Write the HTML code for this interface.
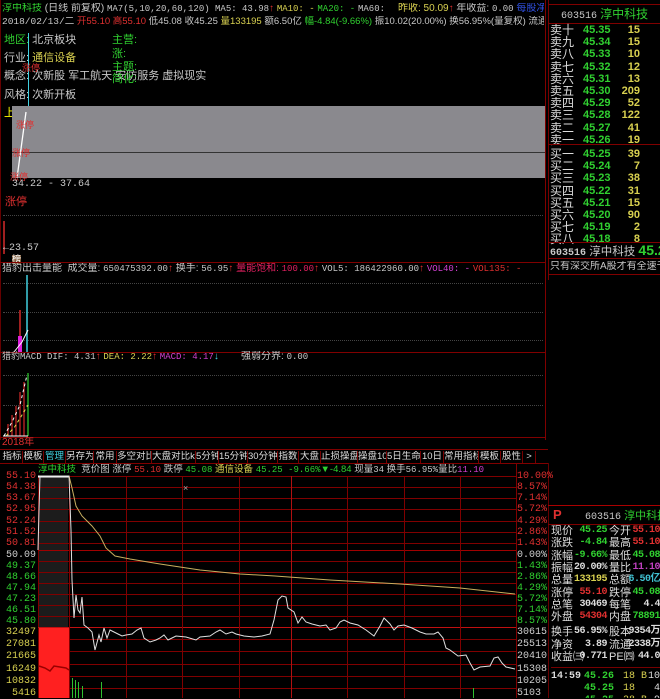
<!DOCTYPE html><html><head><meta charset="utf-8"><style>
*{margin:0;padding:0;box-sizing:border-box}
body{width:660px;height:698px;background:#000;overflow:hidden;position:relative;font-family:"Liberation Sans","Noto Sans CJK SC",sans-serif;font-size:11px;color:#c8c8c8}
.a{position:absolute;white-space:nowrap;line-height:12px}
.m{font-family:"Liberation Mono","Noto Sans CJK SC",monospace;font-size:10px}
.r{color:#e03030}.g{color:#30d030}.y{color:#d8d050}.w{color:#d0d0d0}.c{color:#40d0e0}.p{color:#d040d0}.b{color:#3050e0}
.hl{position:absolute;height:1px;background:#800000}
.vl{position:absolute;width:1px;background:#800000}
.dl{position:absolute;height:0;border-top:1px dotted #444}
.tab{position:absolute;top:451px;height:12px;font-size:9.5px;line-height:12px;color:#ddd;border-right:1px solid #700;white-space:nowrap;overflow:hidden;text-align:center}
.ob span{position:absolute}
.clip{position:absolute;overflow:hidden;white-space:nowrap;line-height:12px}
</style></head><body>
<div class="vl" style="left:0;top:0;height:440px;background:#600"></div>
<div class="vl" style="left:545px;top:0;height:440px"></div>
<div class="clip" style="left:2px;top:3px;width:388px;font-size:10px"><span class="g">淳中科技</span> (日线 前复权) <span class="m" style="font-size:9px">MA7(5,10,20,60,120) MA5: 43.98</span><span class="r">↑</span> <span class="m y" style="font-size:9px">MA10: -</span> <span class="m g" style="font-size:9px">MA20: -</span> <span class="m" style="font-size:9px">MA60: -</span> <span class="m b" style="font-size:9px">MA120 -</span></div>
<div class="clip" style="left:398px;top:3px;width:146px;font-size:10px"><span class="y">昨收: 50.09</span><span class="r">↑</span> 年收益: <span class="m" style="font-size:9px">0.00</span> <span class="b">每股净资产</span></div>
<div class="clip" style="left:2px;top:16px;width:542px;font-size:9.5px"><span class="m" style="font-size:9.5px">2018/02/13/二</span> <span class="r">开55.10 高55.10</span> 低45.08 收45.25 <span class="y">量133195</span> 额6.50亿 <span class="g">幅-4.84(-9.66%)</span> 振10.02(20.00%) 换56.95%(量复权) 流通2338万 <span class="y">通信设备</span></div>
<div class="a" style="left:4px;top:34px"><span class="g">地区:</span> 北京板块</div>
<div class="a" style="left:4px;top:52px">行业: <span class="y">通信设备</span></div>
<div class="a" style="left:4px;top:70px">概念: 次新股 军工航天 安防服务 虚拟现实</div>
<div class="a" style="left:4px;top:89px">风格: 次新开板</div>
<div class="a" style="left:4px;top:107px;color:#ff0">上市: <span class="y">20180202</span></div>
<div class="a g" style="left:112px;top:34px">主营:</div>
<div class="a g" style="left:112px;top:48px">涨:</div>
<div class="a g" style="left:112px;top:61px">主题:</div>
<div class="a g" style="left:112px;top:73px">简化:</div>
<div class="vl" style="left:28px;top:33px;height:78px;background:#40d0e0"></div>
<div class="a r" style="left:22px;top:62px;font-size:9px">涨停</div>
<div style="position:absolute;left:12px;top:106px;width:533px;height:72px;background:#8a898e"></div>
<div style="position:absolute;left:12px;top:152px;width:533px;height:1px;background:#333"></div>
<svg style="position:absolute;left:0;top:0" width="545" height="440"><line x1="26" y1="112" x2="17" y2="178" stroke="#fff" stroke-width="1.3"/></svg>
<div class="a r" style="left:16px;top:119px;font-size:9px">涨停</div>
<div class="a r" style="left:12px;top:147px;font-size:9px">涨停</div>
<div class="a r" style="left:10px;top:171px;font-size:9px">涨停</div>
<div class="a m" style="left:12px;top:179px">34.22 - 37.64</div>
<div class="a r" style="left:5px;top:196px">涨停</div>
<div class="dl" style="left:3px;top:215px;width:540px"></div>
<div style="position:absolute;left:3px;top:221px;width:2px;height:33px;background:#a02020"></div>
<div class="a m" style="left:3px;top:243px">←23.57</div>
<div class="a" style="left:12px;top:255px;font-size:9px;background:#806040;color:#fff;line-height:9px">榜</div>
<div class="hl" style="left:0;top:262px;width:545px"></div>
<div class="clip" style="left:2px;top:263px;width:542px;font-size:10px">猎豹出击量能 &nbsp;成交量: <span class="m" style="font-size:9px">650475392.00</span><span class="r">↑</span> 换手: <span class="m" style="font-size:9px">56.95</span><span class="r">↑</span> <span style="color:#e02060">量能饱和: <span class="m" style="font-size:9px">100.00</span></span><span class="r">↑</span> <span class="m" style="font-size:9px">VOL5: 186422960.00</span><span class="r">↑</span> <span class="m p" style="font-size:9px">VOL40: -</span> <span class="m r" style="font-size:9px">VOL135: -</span></div>
<div class="dl" style="left:3px;top:283px;width:540px"></div>
<div class="dl" style="left:3px;top:312px;width:540px"></div>
<div class="dl" style="left:3px;top:340px;width:540px"></div>
<svg style="position:absolute;left:0;top:270px" width="60" height="85"><rect x="19" y="40" width="2" height="42" fill="#a02020"/><rect x="18" y="66" width="4" height="16" fill="#e020e0"/><line x1="27" y1="5" x2="27" y2="82" stroke="#40d0e0" stroke-width="1.5"/><polyline points="14,82 22,72 28,60" fill="none" stroke="#fff"/></svg>
<div class="hl" style="left:0;top:352px;width:545px"></div>
<div class="clip" style="left:2px;top:351px;width:542px;font-size:10px"><span class="m" style="font-size:9px">猎豹MACD DIF: 4.31</span><span class="r">↑</span> <span class="m y" style="font-size:9px">DEA: 2.22</span><span class="r">↑</span> <span class="m p" style="font-size:9px">MACD: 4.17</span><span class="c">↓</span> &nbsp; &nbsp; &nbsp; &nbsp;强弱分界: <span class="m" style="font-size:9px">0.00</span></div>
<div class="dl" style="left:3px;top:375px;width:540px"></div>
<div class="dl" style="left:3px;top:405px;width:540px"></div>
<svg style="position:absolute;left:0;top:360px" width="40" height="80"><g fill="#801818"><rect x="7" y="64" width="2" height="12"/><rect x="11" y="55" width="2" height="21"/><rect x="15" y="46" width="2" height="30"/><rect x="19" y="32" width="2" height="44"/><rect x="23" y="22" width="2" height="54"/></g><line x1="28" y1="13" x2="28" y2="76" stroke="#30d030" stroke-width="1.2"/><polyline points="4,76 12,62 20,45 27,15" fill="none" stroke="#fff" stroke-dasharray="3,3"/><polyline points="6,76 14,68 22,55 28,45" fill="none" stroke="#e0e050" stroke-dasharray="3,3"/><line x1="3" y1="76" x2="28" y2="76" stroke="#fff"/></svg>
<div class="hl" style="left:0;top:437px;width:545px"></div>
<div class="a r" style="left:2px;top:437px;font-size:10px">2018年</div>
<div class="hl" style="left:0;top:449px;width:548px"></div>
<div class="hl" style="left:0;top:463px;width:548px"></div>
<div class="tab" style="left:2px;width:21px">指标</div><div class="tab" style="left:23px;width:21px">模板</div><div class="tab" style="left:44px;width:22px;color:#40d0e0">管理</div><div class="tab" style="left:66px;width:28px">另存为</div><div class="tab" style="left:94px;width:23px">常用</div><div class="tab" style="left:117px;width:35px">多空对比</div><div class="tab" style="left:152px;width:44px">大盘对比k</div><div class="tab" style="left:196px;width:23px">5分钟</div><div class="tab" style="left:219px;width:29px">15分钟</div><div class="tab" style="left:248px;width:30px">30分钟</div><div class="tab" style="left:278px;width:21px">指数</div><div class="tab" style="left:299px;width:22px">大盘</div><div class="tab" style="left:321px;width:37px">止损操盘</div><div class="tab" style="left:358px;width:29px">操盘10</div><div class="tab" style="left:387px;width:34px">5日生命</div><div class="tab" style="left:421px;width:23px">10日</div><div class="tab" style="left:444px;width:35px">常用指标</div><div class="tab" style="left:479px;width:22px">模板</div><div class="tab" style="left:501px;width:22px">股性</div><div class="tab" style="left:523px;width:13px">&gt;</div>
<div class="clip" style="left:38px;top:464px;width:478px;font-size:9.5px"><span class="g">淳中科技</span> &nbsp;竞价图 涨停 <span class="r m" style="font-size:9px">55.10</span> 跌停 <span class="g m" style="font-size:9px">45.08</span> <span class="y">通信设备</span> <span class="g m" style="font-size:9px">45.25 -9.66%</span><span class="g">▼-4.84</span> 现量<span class="m" style="font-size:9px">34</span> 换手<span class="m" style="font-size:9px">56.95%</span>量比<span class="p m" style="font-size:9px">11.10</span></div>
<div style="position:absolute;left:38px;top:476px;width:30px;height:222px;background:#1c1c1c"></div>
<div class="vl" style="left:38px;top:476px;height:222px"></div>
<div class="vl" style="left:516px;top:463px;height:235px"></div>
<div class="vl" style="left:548px;top:463px;height:235px;background:#600"></div>
<div class="hl" style="left:38px;top:627px;width:478px;background:#c01010"></div>
<svg style="position:absolute;left:0;top:470px" width="548" height="228">
<g stroke="#800000" stroke-width="1">
<line x1="38" x2="516" y1="6.5" y2="6.5"/><line x1="38" x2="516" y1="17.5" y2="17.5"/><line x1="38" x2="516" y1="28.5" y2="28.5"/><line x1="38" x2="516" y1="39.5" y2="39.5"/><line x1="38" x2="516" y1="51.5" y2="51.5"/><line x1="38" x2="516" y1="62.5" y2="62.5"/><line x1="38" x2="516" y1="73.5" y2="73.5"/><line x1="38" x2="516" y1="80.5" y2="80.5" stroke="#a00000"/><line x1="38" x2="516" y1="91.5" y2="91.5"/><line x1="38" x2="516" y1="102.5" y2="102.5"/><line x1="38" x2="516" y1="113.5" y2="113.5"/><line x1="38" x2="516" y1="124.5" y2="124.5"/><line x1="38" x2="516" y1="135.5" y2="135.5"/><line x1="38" x2="516" y1="146.5" y2="146.5"/>
<line x1="38" x2="516" y1="169.5" y2="169.5"/><line x1="38" x2="516" y1="181.5" y2="181.5"/><line x1="38" x2="516" y1="194.5" y2="194.5"/><line x1="38" x2="516" y1="206.5" y2="206.5"/><line x1="38" x2="516" y1="218.5" y2="218.5"/>
<line x1="69.5" x2="69.5" y1="6" y2="228"/><line x1="126.5" x2="126.5" y1="6" y2="228"/><line x1="182.5" x2="182.5" y1="6" y2="228"/><line x1="239.5" x2="239.5" y1="6" y2="228"/><line x1="291.5" x2="291.5" y1="6" y2="228" stroke="#b01010"/><line x1="347.5" x2="347.5" y1="6" y2="228"/><line x1="404.5" x2="404.5" y1="6" y2="228"/><line x1="460.5" x2="460.5" y1="6" y2="228"/>
</g>
<rect x="39" y="158" width="30" height="70" fill="#ff2020"/>
<polyline points="39,196 45,198 50,201 54,196 60,197 66,198 69,200" fill="none" stroke="#900" stroke-width="1.5"/>
<g fill="#30c030"><rect x="72" y="208" width="1" height="20"/><rect x="75" y="210" width="1" height="18"/><rect x="78" y="212" width="1" height="16"/><rect x="82" y="216" width="1" height="12"/><rect x="101" y="212" width="1" height="16"/><rect x="473" y="218" width="1" height="10"/></g>
<line x1="38" y1="6.5" x2="69" y2="6.5" stroke="#fff" stroke-width="2"/>
<polyline points="69,6 72,18 76,36 82,46 92,56 100,66 106,78 115,86 130,89 160,94 200,100 240,104 275,106 330,110 400,114 460,118 515,124" fill="none" stroke="#c8b060" stroke-width="1"/>
<polyline points="38,80 39,40 40,6 69,6 71,60 72,110 74,148 76,125 78,140 80,143 82,127 84,155 88,158 92,162 95,180 99,165 101,172 104,158 107,168 110,160 114,162 118,164 122,166 126,165 132,164 137,160 141,158 144,168 150,172 156,170 160,168 164,165 168,170 172,168 176,166 186,167 196,170 200,167 210,166 216,162 220,160 226,164 232,162 236,164 244,166 254,167 262,166 270,164 274,150 278,130 282,126 286,127 288,138 294,142 298,153 302,147 306,152 312,154 320,156 326,155 330,160 336,158 340,152 344,150 350,153 358,155 366,160 374,166 380,156 384,148 390,154 394,160 398,156 404,155 412,158 420,162 426,164 434,164 438,162 443,168 446,178 450,180 458,186 466,185 470,193 474,200 480,197 490,196 494,188 498,187 502,193 506,197 515,199" fill="none" stroke="#e0e0e0" stroke-width="1"/>
<text x="183" y="21" fill="#aaa" font-size="9">×</text>
</svg>
<div class="a m" style="left:14px;top:471px;line-height:11px;text-align:right;width:22px">
<div class="r" style="position:absolute;top:0;right:0">55.10</div><div class="r" style="position:absolute;top:11px;right:0">54.38</div><div class="r" style="position:absolute;top:22px;right:0">53.67</div><div class="r" style="position:absolute;top:33px;right:0">52.95</div><div class="r" style="position:absolute;top:45px;right:0">52.24</div><div class="r" style="position:absolute;top:56px;right:0">51.52</div><div class="r" style="position:absolute;top:67px;right:0">50.81</div><div class="w" style="position:absolute;top:79px;right:0">50.09</div><div class="g" style="position:absolute;top:90px;right:0">49.37</div><div class="g" style="position:absolute;top:101px;right:0">48.66</div><div class="g" style="position:absolute;top:112px;right:0">47.94</div><div class="g" style="position:absolute;top:123px;right:0">47.23</div><div class="g" style="position:absolute;top:134px;right:0">46.51</div><div class="g" style="position:absolute;top:145px;right:0">45.80</div>
<div class="y" style="position:absolute;top:156px;right:0">32497</div><div class="y" style="position:absolute;top:168px;right:0">27081</div><div class="y" style="position:absolute;top:180px;right:0">21665</div><div class="y" style="position:absolute;top:193px;right:0">16249</div><div class="y" style="position:absolute;top:205px;right:0">10832</div><div class="y" style="position:absolute;top:217px;right:0">5416</div></div>
<div class="a m" style="left:517px;top:471px;line-height:11px">
<div class="r" style="position:absolute;top:0">10.00%</div><div class="r" style="position:absolute;top:11px">8.57%</div><div class="r" style="position:absolute;top:22px">7.14%</div><div class="r" style="position:absolute;top:33px">5.72%</div><div class="r" style="position:absolute;top:45px">4.29%</div><div class="r" style="position:absolute;top:56px">2.86%</div><div class="r" style="position:absolute;top:67px">1.43%</div><div class="w" style="position:absolute;top:79px">0.00%</div><div class="g" style="position:absolute;top:90px">1.43%</div><div class="g" style="position:absolute;top:101px">2.86%</div><div class="g" style="position:absolute;top:112px">4.29%</div><div class="g" style="position:absolute;top:123px">5.72%</div><div class="g" style="position:absolute;top:134px">7.14%</div><div class="g" style="position:absolute;top:145px">8.57%</div>
<div class="w" style="position:absolute;top:156px">30615</div><div class="w" style="position:absolute;top:168px">25513</div><div class="w" style="position:absolute;top:180px">20410</div><div class="w" style="position:absolute;top:193px">15308</div><div class="w" style="position:absolute;top:205px">10205</div><div class="w" style="position:absolute;top:217px">5103</div></div>
<div class="vl" style="left:548px;top:0;height:280px;background:#700"></div>
<div class="hl" style="left:548px;top:4px;width:112px"></div>
<div class="a" style="left:561px;top:8px"><span class="m">603516</span> <span class="g" style="font-size:12px">淳中科技</span></div>
<div class="hl" style="left:548px;top:23px;width:112px"></div>
<div class="ob" style="position:absolute;left:550px;top:24px;width:110px;height:220px;font-size:12px;line-height:12px">
<div id="ob"></div></div>
<div class="hl" style="left:548px;top:144px;width:112px"></div>
<div class="hl" style="left:548px;top:242px;width:112px"></div>
<div class="clip" style="left:550px;top:243px;width:110px;font-size:11.5px;line-height:14px"><b class="m" style="font-size:10px">603516</b> 淳中科技 <b class="g" style="font-size:14px">45.2</b></div>
<div class="hl" style="left:548px;top:258px;width:112px"></div>
<div class="clip" style="left:550px;top:261px;width:110px;font-size:10px">只有深交所A股才有全速千档盘</div>
<div class="hl" style="left:548px;top:274px;width:112px"></div>
<div class="hl" style="left:548px;top:505px;width:112px;background:#a00"></div>
<div class="a" style="left:553px;top:509px"><b class="r" style="font-size:13px">P</b></div>
<div class="a" style="left:585px;top:510px"><span class="m">603516</span> <span class="g">淳中科技</span></div>
<div class="hl" style="left:548px;top:524px;width:112px"></div>
<div id="q" style="position:absolute;left:551px;top:525px;width:109px;height:173px;font-size:11px;overflow:hidden"></div>
<script>
var ob=[["卖十","45.35","15"],["卖九","45.34","15"],["卖八","45.33","10"],["卖七","45.32","12"],["卖六","45.31","13"],["卖五","45.30","209"],["卖四","45.29","52"],["卖三","45.28","122"],["卖二","45.27","41"],["卖一","45.26","19"],["买一","45.25","39"],["买二","45.24","7"],["买三","45.23","38"],["买四","45.22","31"],["买五","45.21","15"],["买六","45.20","90"],["买七","45.19","2"],["买八","45.18","8"]];
var h="";ob.forEach(function(r,i){var t=i*12.2+(i>=10?2:0);h+='<span style="top:'+t+'px;left:0;color:#ddd">'+r[0]+'</span><span style="top:'+t+'px;left:33px;color:#30d030;font-weight:bold;font-size:11px">'+r[1]+'</span><span style="top:'+t+'px;right:20px;color:#d8d050;font-size:11px;font-weight:bold">'+r[2]+'</span>';});
document.getElementById("ob").outerHTML='<div style="position:relative">'+h+'</div>';
var q=[["现价","45.25","#30d030","今开","55.10","#e03030"],["涨跌","-4.84","#30d030","最高","55.10","#e03030"],["涨幅","-9.66%","#30d030","最低","45.08","#30d030"],["振幅","20.00%","#ddd","量比","11.10","#c040c0"],["总量","133195","#d8d050","总额","6.50亿","#40c0d0"],["涨停","55.10","#e03030","跌停","45.08","#30d030"],["总笔","30469","#ddd","每笔","4.4","#ddd"],["外盘","54304","#e03030","内盘","78891","#30d030"],["换手","56.95%","#ddd","股本","9354万","#ddd"],["净资","3.89","#ddd","流通","2338万","#ddd"],["收益㈢","0.771","#ddd","PE㈣","44.0","#ddd"]];
var s="";q.forEach(function(r,i){var t=i*12.3+(i>=8?3:0);s+='<div class="a" style="top:'+t+'px;left:0;color:#ddd;font-size:11px">'+r[0]+'</div><div class="a m" style="top:'+t+'px;left:23px;width:33px;text-align:right;color:'+r[2]+';font-weight:bold;font-size:10px;letter-spacing:-0.5px">'+r[1]+'</div><div class="a" style="top:'+t+'px;left:58px;color:#ddd;font-size:11px">'+r[3]+'</div><div class="a m" style="top:'+t+'px;right:0;color:'+r[5]+';font-weight:bold;font-size:10px;letter-spacing:-0.5px">'+r[4]+'</div>';});
s+='<div class="a" style="top:142px;left:0;width:109px;height:1px;background:#700"></div>';
[["14:59","45.26","18 B","10"],["","45.25","18","4"],["","45.25","28 B","9"]].forEach(function(r,i){var t=146+i*12;s+='<div class="a m" style="top:'+t+'px;left:0;color:#ddd;font-weight:bold;font-size:10px">'+r[0]+'</div><div class="a m" style="top:'+t+'px;left:33px;color:#30d030;font-weight:bold;font-size:10px">'+r[1]+'</div><div class="a m" style="top:'+t+'px;left:72px;color:#d8d050;font-size:10px">'+r[2]+'</div><div class="a m" style="top:'+t+'px;right:0;color:#ddd;font-size:10px">'+r[3]+'</div>';});
document.getElementById("q").innerHTML=s;
</script>
</body></html>
